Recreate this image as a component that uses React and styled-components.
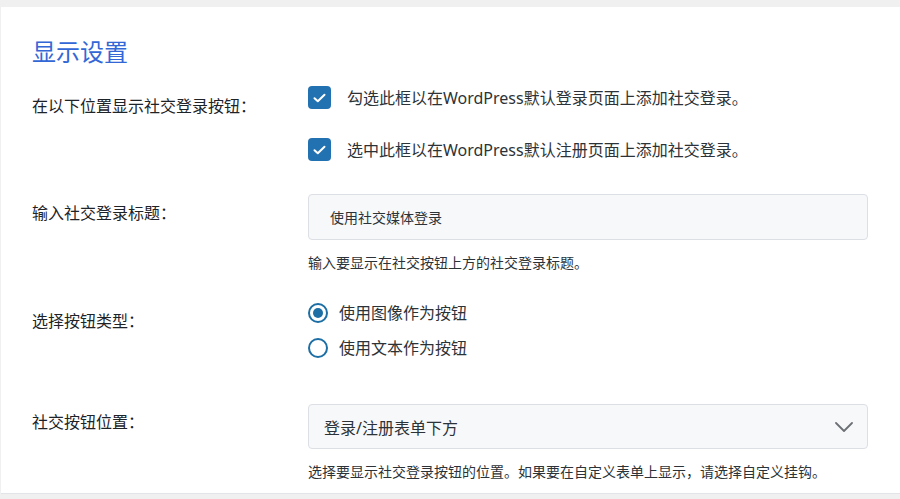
import React from 'react';
import { styled, createGlobalStyle } from 'styled-components';

const GlobalStyle = createGlobalStyle`
  html, body {
    margin: 0;
    padding: 0;
    background: #f0f0f1;
    font-family: "Noto Sans", "Noto Sans CJK SC", sans-serif;
    color: #1d2327;
  }
`;

const Page = styled.div`
  padding: 7px 0 5px 1px;
`;

const Card = styled.div`
  background: #fff;
  border-bottom: 1px solid #e2e4e7;
  padding: 28px 32px 14px 31px;
  height: 487px;
  box-sizing: border-box;
`;

const Title = styled.h2`
  margin: 0 0 17px;
  font-size: 24px;
  line-height: 34px;
  font-weight: 400;
  color: #3467d6;
`;

const Row = styled.div`
  display: grid;
  grid-template-columns: 276px 1fr;
  align-items: start;
  margin-bottom: ${p => p.gap || 0}px;
`;

const Label = styled.div`
  font-size: 16px;
  line-height: 20px;
  padding-top: ${p => p.top || 0}px;
`;

const Field = styled.div`
  display: flex;
  flex-direction: column;
`;

const CheckRow = styled.label`
  display: flex;
  align-items: center;
  gap: 16px;
  font-size: 16px;
  line-height: 22px;
  color: #2c3338;
  & + & {
    margin-top: 29px;
  }
`;

const Box = styled.span`
  width: 23px;
  height: 23px;
  border-radius: 4px;
  background: #2271b1;
  display: flex;
  align-items: center;
  justify-content: center;
  flex-shrink: 0;
`;

const TextInput = styled.div`
  height: 46px;
  box-sizing: border-box;
  border: 1px solid #dcdfe4;
  border-radius: 4px;
  background: #f7f8fa;
  display: flex;
  align-items: center;
  padding: 0 21px;
  font-size: 14px;
  color: #2c3338;
  width: 560px;
`;

const Help = styled.div`
  font-size: 14px;
  line-height: 18px;
  margin-top: 14px;
  color: #2c3338;
`;

const RadioRow = styled.label`
  display: flex;
  align-items: center;
  gap: 11px;
  font-size: 16px;
  line-height: 22px;
  color: #2c3338;
  & + & {
    margin-top: 13px;
  }
`;

const Radio = styled.span`
  width: 20px;
  height: 20px;
  box-sizing: border-box;
  border-radius: 50%;
  border: 2px solid #1c6ea4;
  display: flex;
  align-items: center;
  justify-content: center;
  flex-shrink: 0;
  &::after {
    content: '';
    display: ${p => (p.checked ? 'block' : 'none')};
    width: 10px;
    height: 10px;
    border-radius: 50%;
    background: #1c6ea4;
  }
`;

const Select = styled.div`
  height: 45px;
  box-sizing: border-box;
  border: 1px solid #dcdfe4;
  border-radius: 4px;
  background: #f7f8fa;
  display: flex;
  align-items: center;
  justify-content: space-between;
  padding: 0 14px 0 15px;
  font-size: 16px;
  color: #2c3338;
  width: 560px;
`;

const Check = () => (
  <svg width="13" height="10" viewBox="0 0 13 10">
    <path d="M1.5 5.2 L4.8 8.3 L11.5 1.7" fill="none" stroke="#fff" strokeWidth="2" strokeLinecap="round" strokeLinejoin="round" />
  </svg>
);

const Chevron = () => (
  <svg width="18" height="10" viewBox="0 0 18 10">
    <path d="M1 1 L9 9 L17 1" fill="none" stroke="#6c7075" strokeWidth="1.8" strokeLinecap="round" strokeLinejoin="round" />
  </svg>
);

const App = () => {
  return (
    <Page>
      <GlobalStyle />
      <Card>
        <Title>显示设置</Title>
        <Row gap={33}>
          <Label top={10}>在以下位置显示社交登录按钮：</Label>
          <Field>
            <CheckRow><Box><Check /></Box>勾选此框以在WordPress默认登录页面上添加社交登录。</CheckRow>
            <CheckRow><Box><Check /></Box>选中此框以在WordPress默认注册页面上添加社交登录。</CheckRow>
          </Field>
        </Row>
        <Row gap={30}>
          <Label top={9}>输入社交登录标题：</Label>
          <Field>
            <TextInput>使用社交媒体登录</TextInput>
            <Help>输入要显示在社交按钮上方的社交登录标题。</Help>
          </Field>
        </Row>
        <Row gap={45}>
          <Label top={9}>选择按钮类型：</Label>
          <Field>
            <RadioRow><Radio checked />使用图像作为按钮</RadioRow>
            <RadioRow><Radio />使用文本作为按钮</RadioRow>
          </Field>
        </Row>
        <Row>
          <Label top={8}>社交按钮位置：</Label>
          <Field>
            <Select>登录/注册表单下方<Chevron /></Select>
            <Help>选择要显示社交登录按钮的位置。如果要在自定义表单上显示，请选择自定义挂钩。</Help>
          </Field>
        </Row>
      </Card>
    </Page>
  );
};

export default App;
